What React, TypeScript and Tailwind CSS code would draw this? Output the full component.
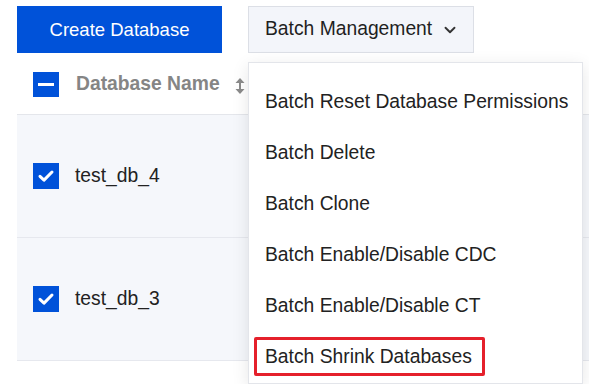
import { ChevronDown } from 'lucide-react';

const ROWS = ['test_db_4', 'test_db_3'];

const MENU = [
  'Batch Reset Database Permissions',
  'Batch Delete',
  'Batch Clone',
  'Batch Enable/Disable CDC',
  'Batch Enable/Disable CT',
  'Batch Shrink Databases',
];

function CheckIcon() {
  return (
    <svg width="18" height="18" viewBox="0 0 18 18" fill="none">
      <path d="M3 9.3l4 3.8L15 5" stroke="white" strokeWidth="3" strokeLinecap="round" strokeLinejoin="round" />
    </svg>
  );
}

function SortIcon() {
  return (
    <svg width="10" height="16" viewBox="0 0 10 16" fill="#8b8b8b">
      <path d="M5 0L9.5 5H0.5z" />
      <rect x="4" y="4" width="2" height="8" />
      <path d="M5 16L9.5 11H0.5z" />
    </svg>
  );
}

export default function App() {
  return (
    <div className="relative h-[384px] w-[589px] overflow-hidden bg-white font-['Liberation_Sans',Arial,sans-serif]">
      {/* Toolbar */}
      <div className="flex items-start gap-[26px] pl-[17px] pt-[6px]">
        <button className="h-[47px] w-[205px] bg-[#0052d9] text-[18.5px] text-white">Create Database</button>
        <button className="flex h-[47px] w-[226px] items-center gap-[9px] border border-[#dcdfe6] bg-[#f3f5fa] pl-[16px] text-[19.3px] text-[#1f1f1f]">
          Batch Management
          <ChevronDown size={18} strokeWidth={2.5} className="text-[#333]" />
        </button>
      </div>

      {/* Table */}
      <div className="ml-[17px] mt-[9px]">
        <div className="flex h-[53px] items-center border-b border-[#e4e6eb] pb-[7px] pl-[16px]">
          <span className="flex h-[25px] w-[26px] items-center justify-center bg-[#0052d9]">
            <span className="h-[3px] w-[16px] bg-white" />
          </span>
          <span className="ml-[17px] text-[19.3px] font-bold text-[#858585]">Database Name</span>
          <span className="ml-[15px] mt-[2px]">
            <SortIcon />
          </span>
        </div>
        {ROWS.map((name) => (
          <div key={name} className="flex h-[123px] items-center border-b border-[#e6e8ee] bg-[#f5f7fb] pl-[16px]">
            <span className="flex h-[26px] w-[26px] items-center justify-center bg-[#0052d9]">
              <CheckIcon />
            </span>
            <span className="ml-[16px] text-[19.3px] text-[#222]">{name}</span>
          </div>
        ))}
      </div>

      {/* Dropdown menu */}
      <div className="absolute left-[248px] top-[62px] w-[335px] border border-[#e3e5ea] bg-white pt-[14px] shadow-[0_4px_16px_rgba(0,0,0,0.10)]">
        {MENU.map((item, i) => (
          <div key={item} className="relative flex h-[51px] items-center pl-[16px] text-[19.3px] text-[#222]">
            {i === MENU.length - 1 && (
              <span className="absolute left-[5px] top-[5px] h-[39px] w-[231px] rounded-[2px] border-[3px] border-[#e5202b]" />
            )}
            {item}
          </div>
        ))}
      </div>
    </div>
  );
}
